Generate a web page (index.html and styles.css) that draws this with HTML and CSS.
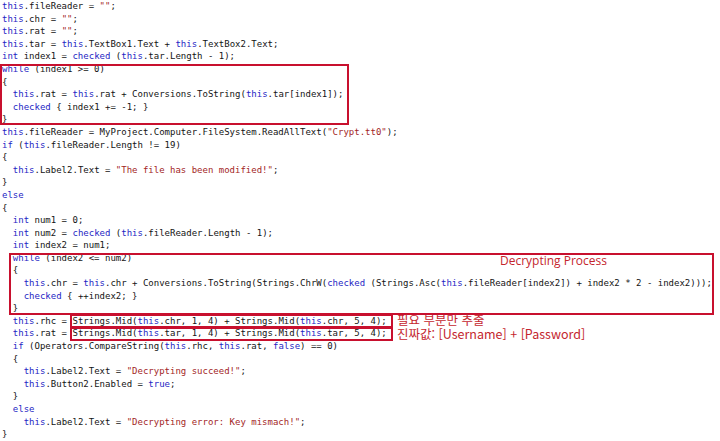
FILE: index.html
```html
<!DOCTYPE html>
<html lang="ko">
<head>
  <meta charset="UTF-8" />
  <title>Decrypting Process</title>
  <link rel="stylesheet" href="styles.css">
</head>
<body>
  <div class="sheet">
    <div class="code">
      <div class="ln"><span class="kw">this</span>.fileReader = <span class="str">""</span>;</div>
      <div class="ln"><span class="kw">this</span>.chr = <span class="str">""</span>;</div>
      <div class="ln"><span class="kw">this</span>.rat = <span class="str">""</span>;</div>
      <div class="ln"><span class="kw">this</span>.tar = <span class="kw">this</span>.TextBox1.Text + <span class="kw">this</span>.TextBox2.Text;</div>
      <div class="ln"><span class="kw">int</span> index1 = <span class="kw">checked</span> (<span class="kw">this</span>.tar.Length - 1);</div>
      <div class="ln"><span class="kw">while</span> (index1 &gt;= 0)</div>
      <div class="ln">{</div>
      <div class="ln">  <span class="kw">this</span>.rat = <span class="kw">this</span>.rat + Conversions.ToString(<span class="kw">this</span>.tar[index1]);</div>
      <div class="ln">  <span class="kw">checked</span> { index1 += -1; }</div>
      <div class="ln">}</div>
      <div class="ln"><span class="kw">this</span>.fileReader = MyProject.Computer.FileSystem.ReadAllText(<span class="str">"Crypt.tt0"</span>);</div>
      <div class="ln"><span class="kw">if</span> (<span class="kw">this</span>.fileReader.Length != 19)</div>
      <div class="ln">{</div>
      <div class="ln">  <span class="kw">this</span>.Label2.Text = <span class="str">"The file has been modified!"</span>;</div>
      <div class="ln">}</div>
      <div class="ln"><span class="kw">else</span></div>
      <div class="ln">{</div>
      <div class="ln">  <span class="kw">int</span> num1 = 0;</div>
      <div class="ln">  <span class="kw">int</span> num2 = <span class="kw">checked</span> (<span class="kw">this</span>.fileReader.Length - 1);</div>
      <div class="ln">  <span class="kw">int</span> index2 = num1;</div>
      <div class="ln">  <span class="kw">while</span> (index2 &lt;= num2)</div>
      <div class="ln">  {</div>
      <div class="ln">    <span class="kw">this</span>.chr = <span class="kw">this</span>.chr + Conversions.ToString(Strings.ChrW(<span class="kw">checked</span> (Strings.Asc(<span class="kw">this</span>.fileReader[index2]) + index2 * 2 - index2)));</div>
      <div class="ln">    <span class="kw">checked</span> { ++index2; }</div>
      <div class="ln">  }</div>
      <div class="ln">  <span class="kw">this</span>.rhc = Strings.Mid(<span class="kw">this</span>.chr, 1, 4) + Strings.Mid(<span class="kw">this</span>.chr, 5, 4);</div>
      <div class="ln">  <span class="kw">this</span>.rat = Strings.Mid(<span class="kw">this</span>.tar, 1, 4) + Strings.Mid(<span class="kw">this</span>.tar, 5, 4);</div>
      <div class="ln">  <span class="kw">if</span> (Operators.CompareString(<span class="kw">this</span>.rhc, <span class="kw">this</span>.rat, <span class="kw">false</span>) == 0)</div>
      <div class="ln">  {</div>
      <div class="ln">    <span class="kw">this</span>.Label2.Text = <span class="str">"Decrypting succeed!"</span>;</div>
      <div class="ln">    <span class="kw">this</span>.Button2.Enabled = <span class="kw">true</span>;</div>
      <div class="ln">  }</div>
      <div class="ln">  <span class="kw">else</span></div>
      <div class="ln">    <span class="kw">this</span>.Label2.Text = <span class="str">"Decrypting error: Key mismach!"</span>;</div>
      <div class="ln">}</div>
    </div>

    <!-- annotations drawn over the code -->
    <div class="mark mark-loop"></div>
    <div class="mark mark-decrypt"></div>
    <div class="mark mark-rhc"></div>
    <div class="mark mark-rat"></div>
    <div class="note note-decrypt">Decrypting Process</div>
    <div class="note note-extract">필요 부분만 추출</div>
    <div class="note note-real">진짜값: [Username] + [Password]</div>
  </div>
</body>
</html>
```

FILE: styles.css
```css
* {
  margin: 0;
  padding: 0;
  box-sizing: border-box;
}

body {
  background: #ffffff;
  width: 720px;
  height: 441px;
  overflow: hidden;
}

.sheet {
  position: relative;
  width: 720px;
  height: 441px;
}

.code {
  padding-left: 2px;
  font-family: 'DejaVu Sans Mono', 'Liberation Mono', monospace;
  font-size: 9px;
  line-height: 12.6px;
  color: #141414;
}

.ln {
  height: 12.6px;
  white-space: pre;
}

.kw {
  color: #1f1fc4;
}

.str {
  color: #a31f1f;
}

.mark {
  position: absolute;
  border: 2px solid #c8102e;
}

.mark-loop {
  left: 0;
  top: 64px;
  width: 349px;
  height: 61px;
}

.mark-decrypt {
  left: 9px;
  top: 253px;
  width: 705px;
  height: 62px;
}

.mark-rhc {
  left: 70px;
  top: 314px;
  width: 323px;
  height: 14px;
}

.mark-rat {
  left: 70px;
  top: 327px;
  width: 323px;
  height: 14px;
}

.note {
  position: absolute;
  color: #c4262e;
  white-space: nowrap;
}

.note-decrypt {
  left: 500px;
  top: 253px;
  font-family: 'Open Sans', 'Noto Sans', sans-serif;
  font-size: 12px;
  line-height: 16px;
}

.note-extract,
.note-real {
  left: 397px;
  font-family: 'Noto Sans CJK KR', 'Noto Sans', sans-serif;
  font-size: 12.5px;
  line-height: 13px;
}

.note-extract {
  top: 313px;
}

.note-real {
  top: 327px;
}
```
